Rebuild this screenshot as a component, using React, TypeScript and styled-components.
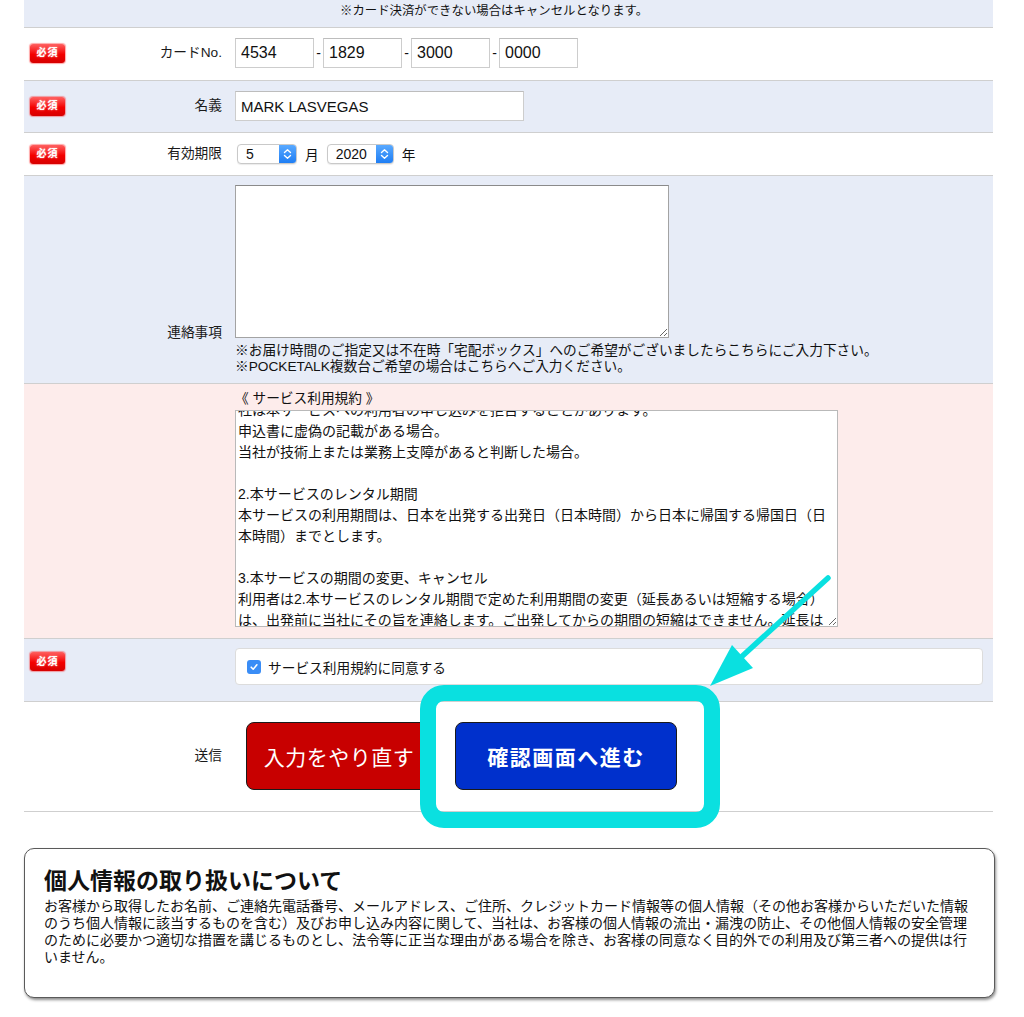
import React, { useLayoutEffect, useRef, ReactNode } from 'react'
import styled, { createGlobalStyle } from 'styled-components';

const FONT = `"Liberation Sans", "Noto Sans CJK JP", sans-serif`;

const Global = createGlobalStyle`
  html, body { margin: 0; padding: 0; background: #fff; }
  body { font-family: ${FONT}; color: #111; }
`

const Shell = styled.div`
  position: relative;
  width: 1024px;
  height: 1017px;
  overflow: hidden;
`

const Page = styled.div`
  width: 972px;
  margin: 0 0 0 24px;
`

const Table = styled.div`
  width: 969px;
`

const NoticeRow = styled.div`
  background: #e7ecf7;
  border-bottom: 1px solid #cfcfcf;
  padding: 3px 0 7px 316px;
  font-size: 12.4px;
  line-height: 17px;
`

const Row = styled.div<{ $bg?: string; $pad: string; $align?: string }>`
  display: grid;
  grid-template-columns: 211px 1fr;
  align-items: ${p => p.$align || 'center'};
  background: ${p => p.$bg || '#fff'};
  border-bottom: 1px solid #cfcfcf;
  padding: ${p => p.$pad};
`

const LabelCell = styled.div<{ $self?: string; $pad?: string; $padBottom?: string }>`
  display: flex;
  align-items: center;
  justify-content: space-between;
  align-self: ${p => p.$self || 'auto'};
  padding: ${p => p.$pad || '0'} 13px ${p => p.$padBottom || '0'} 6px;
  font-size: 13.7px;
  line-height: 16px;
  color: #1a1a1a;
`

const Badge = styled.span`
  display: inline-flex;
  align-items: center;
  justify-content: center;
  width: 35px;
  height: 19px;
  border-radius: 3px;
  background: linear-gradient(#ff6060, #f40000 55%, #d60000);
  box-shadow: 0 0 1px 1px rgba(255, 0, 0, 0.35);
  color: #fff;
  font-size: 10px;
  font-weight: bold;
  letter-spacing: 1px;
  text-shadow: 0 0 2px rgba(255, 255, 255, 0.7);
`

const Blank = styled.span``

const Cell = styled.div`
  display: flex;
  flex-direction: column;
  align-items: flex-start;
  font-size: 13.7px;
`

const InputLine = styled.div<{ $gap?: number; $indent?: number }>`
  display: flex;
  align-items: center;
  gap: ${p => p.$gap || 0}px;
  padding-left: ${p => p.$indent || 0}px;
  font-size: 13.7px;
`

const TextInput = styled.input<{ $w: number; $fs?: number }>`
  box-sizing: border-box;
  width: ${p => p.$w}px;
  height: 30px;
  border: 1px solid #cdcdcd;
  border-top-color: #bdbdbd;
  background: #fff;
  padding: 0 5px;
  font-family: ${FONT};
  font-size: ${p => p.$fs || 15}px;
  color: #111;
  outline: none;
`

const Dash = styled.span`
  width: 9px;
  text-align: center;
  font-size: 14px;
`

const SelectBox = styled.div<{ $w: number }>`
  display: flex;
  width: ${p => p.$w}px;
  height: 20px;
  box-sizing: border-box;
  border: 1px solid #c9c9c9;
  border-radius: 4px;
  background: #fff;
  overflow: hidden;
  box-shadow: 0 1px 1px rgba(0, 0, 0, 0.08);
  select {
    flex: 1;
    min-width: 0;
    appearance: none;
    border: 0;
    background: transparent;
    padding: 0 0 0 8px;
    font-family: ${FONT};
    font-size: 14px;
    color: #111;
    outline: none;
  }
`

const SelectArrow = styled.span`
  display: flex;
  align-items: center;
  justify-content: center;
  width: 17px;
  background: linear-gradient(#59a9ff, #1f7ef4);
`

const Unit = styled.span`
  font-size: 13.7px;
`

const ContactArea = styled.textarea`
  display: block;
  box-sizing: border-box;
  width: 434px;
  height: 153px;
  border: 1px solid #a3a3a3;
  border-top-color: #8a8a8a;
  padding: 2px;
  font-family: ${FONT};
  font-size: 14px;
  outline: none;
`

const Notes = styled.div`
  margin-top: 5px;
  font-size: 13.7px;
  line-height: 16px;
  color: #111;
`

const TermsTitle = styled.div`
  font-size: 13.7px;
  line-height: 16px;
  margin-bottom: 3px;
`

const TermsArea = styled.textarea`
  display: block;
  box-sizing: border-box;
  width: 603px;
  height: 217px;
  border: 1px solid #b9b9b9;
  padding: 2px;
  font-family: ${FONT};
  font-size: 14px;
  line-height: 21px;
  color: #111;
  background: #fff;
  overflow-y: scroll;
  scrollbar-width: none;
  outline: none;
`

const AgreeBox = styled.label`
  box-sizing: border-box;
  display: flex;
  align-items: center;
  gap: 7px;
  width: 748px;
  height: 37px;
  padding-left: 11px;
  background: #fff;
  border: 1px solid #dcdcdc;
  border-radius: 4px;
  font-size: 13.7px;
  color: #111;
`

const Check = styled.span`
  display: inline-flex;
  align-items: center;
  justify-content: center;
  width: 14px;
  height: 14px;
  border-radius: 3px;
  background: #3a8df6;
`

const Buttons = styled.div`
  display: flex;
  gap: 23px;
  padding-left: 11px;
`

const Button = styled.button<{ $bg: string; $w: number; $bold?: boolean }>`
  width: ${p => p.$w}px;
  height: 68px;
  border: 1px solid #1a1a1a;
  border-radius: 8px;
  background: ${p => p.$bg};
  color: #fff;
  font-family: ${FONT};
  font-size: 21px;
  font-weight: ${p => (p.$bold ? 'bold' : 'normal')};
  letter-spacing: ${p => (p.$bold ? '1.5px' : '0.5px')};
  cursor: pointer;
`

const Privacy = styled.section`
  box-sizing: border-box;
  width: 971px;
  height: 150px;
  margin-top: 36px;
  padding: 18px 19px 0;
  border: 1px solid #5a5a5a;
  border-radius: 10px;
  box-shadow: 1px 2px 3px rgba(0, 0, 0, 0.45);
  background: #fff;
  h2 {
    margin: 0;
    font-size: 23px;
    line-height: 28px;
    font-weight: bold;
    color: #111;
  }
  p {
    margin: 3px 0 0;
    font-size: 14px;
    line-height: 17px;
    color: #111;
  }
`

const Overlay = styled.svg`
  position: absolute;
  left: 0;
  top: 0;
  pointer-events: none;
`

const TERMS = [
  '1.本サービスの申込み',
  '利用者が本サービスの申込みを行う際に、次の各号のいずれかに該当する場合においては、当社は本サービスへの利用者の申し込みを拒否することがあります。',
  '申込書に虚偽の記載がある場合。',
  '当社が技術上または業務上支障があると判断した場合。',
  '',
  '2.本サービスのレンタル期間',
  '本サービスの利用期間は、日本を出発する出発日（日本時間）から日本に帰国する帰国日（日本時間）までとします。',
  '',
  '3.本サービスの期間の変更、キャンセル',
  '利用者は2.本サービスのレンタル期間で定めた利用期間の変更（延長あるいは短縮する場合）は、出発前に当社にその旨を連絡します。ご出発してからの期間の短縮はできません。延長は現地からのご連絡でも承ります。',
  '',
  '4.料金',
  '本サービスの料金は、当社が別途定める料金表に基づくものとします。',
].join('\n')

const Arrows = () => (
  <svg width="9" height="12" viewBox="0 0 9 12">
    <path d="M1.5 4.5 L4.5 1.8 L7.5 4.5 M1.5 7.5 L4.5 10.2 L7.5 7.5" fill="none" stroke="#fff" strokeWidth="1.4" strokeLinecap="round" strokeLinejoin="round" />
  </svg>
)

const Select: React.FC<{ w: number; value: string; options: string[] }> = ({ w, value, options }) => (
  <SelectBox $w={w}>
    <select defaultValue={value}>
      {options.map(o => <option key={o}>{o}</option>)}
    </select>
    <SelectArrow><Arrows /></SelectArrow>
  </SelectBox>
)

const Label: React.FC<{ req?: boolean; children?: ReactNode; self?: string; pad?: string; padBottom?: string }> = ({ req, children, self, pad, padBottom }) => (
  <LabelCell $self={self} $pad={pad} $padBottom={padBottom}>
    {req ? <Badge>必須</Badge> : <Blank />}
    <span>{children}</span>
  </LabelCell>
)

export default function App() {
  const terms = useRef<HTMLTextAreaElement>(null);
  useLayoutEffect(() => {
    if (terms.current) terms.current.scrollTop = 55;
  }, []);

  const months = Array.from({ length: 12 }, (_, i) => String(i + 1));
  const years = ['2018', '2019', '2020', '2021', '2022', '2023'];

  return (
    <Shell>
      <Global />
      <Page>
        <Table>
          <NoticeRow>
            <div>※カード決済ができない場合はキャンセルとなります。</div>
          </NoticeRow>

          <Row $pad="10px 0 12px">
            <Label req>カードNo.</Label>
            <InputLine>
              <TextInput $w={79} $fs={16} defaultValue="4534" />
              <Dash>-</Dash>
              <TextInput $w={79} $fs={16} defaultValue="1829" />
              <Dash>-</Dash>
              <TextInput $w={79} $fs={16} defaultValue="3000" />
              <Dash>-</Dash>
              <TextInput $w={79} $fs={16} defaultValue="0000" />
            </InputLine>
          </Row>

          <Row $bg="#e7ecf7" $pad="10px 0 11px">
            <Label req>名義</Label>
            <InputLine>
              <TextInput $w={289} defaultValue="MARK LASVEGAS" />
            </InputLine>
          </Row>

          <Row $pad="11px 0 11px">
            <Label req>有効期限</Label>
            <InputLine $gap={8} $indent={2}>
              <Select w={60} value="5" options={months} />
              <Unit>月</Unit>
              <Select w={67} value="2020" options={years} />
              <Unit>年</Unit>
            </InputLine>
          </Row>

          <Row $bg="#e7ecf7" $pad="9px 0 8px">
            <Label self="end" padBottom="34px">連絡事項</Label>
            <Cell>
              <ContactArea />
              <Notes>
                <div>※お届け時間のご指定又は不在時「宅配ボックス」へのご希望がございましたらこちらにご入力下さい。</div>
                <div>※POCKETALK複数台ご希望の場合はこちらへご入力ください。</div>
              </Notes>
            </Cell>
          </Row>

          <Row $bg="#fdeceb" $pad="7px 0 11px">
            <Label />
            <Cell>
              <TermsTitle>《 サービス利用規約 》</TermsTitle>
              <TermsArea ref={terms} readOnly defaultValue={TERMS} />
            </Cell>
          </Row>

          <Row $bg="#e7ecf7" $pad="9px 0 16px" $align="start">
            <Label req pad="4px" />
            <Cell>
              <AgreeBox>
                <Check>
                  <svg width="10" height="10" viewBox="0 0 10 10">
                    <path d="M2.2 5.2 L4.2 7.2 L7.9 2.8" fill="none" stroke="#fff" strokeWidth="1.6" strokeLinecap="round" strokeLinejoin="round" />
                  </svg>
                </Check>
                サービス利用規約に同意する
              </AgreeBox>
            </Cell>
          </Row>

          <Row $pad="20px 0 21px">
            <Label>送信</Label>
            <Buttons>
              <Button $bg="#c80000" $w={186}>入力をやり直す</Button>
              <Button $bg="#0030cc" $w={222} $bold>確認画面へ進む</Button>
            </Buttons>
          </Row>
        </Table>

        <Privacy>
          <h2>個人情報の取り扱いについて</h2>
          <p>
            お客様から取得したお名前、ご連絡先電話番号、メールアドレス、ご住所、クレジットカード情報等の個人情報（その他お客様からいただいた情報のうち個人情報に該当するものを含む）及びお申し込み内容に関して、当社は、お客様の個人情報の流出・漏洩の防止、その他個人情報の安全管理のために必要かつ適切な措置を講じるものとし、法令等に正当な理由がある場合を除き、お客様の同意なく目的外での利用及び第三者への提供は行いません。
          </p>
        </Privacy>
      </Page>

      <Overlay width="1024" height="1017" viewBox="0 0 1024 1017">
        <rect x="428" y="693" width="284" height="127" rx="16" fill="none" stroke="#0ae0e0" strokeWidth="16" />
        <line x1="828" y1="578" x2="738" y2="660" stroke="#0ae0e0" strokeWidth="5.5" strokeLinecap="round" />
        <polygon points="710,686 732,645 753,668" fill="#0ae0e0" />
      </Overlay>
    </Shell>
  );
}
